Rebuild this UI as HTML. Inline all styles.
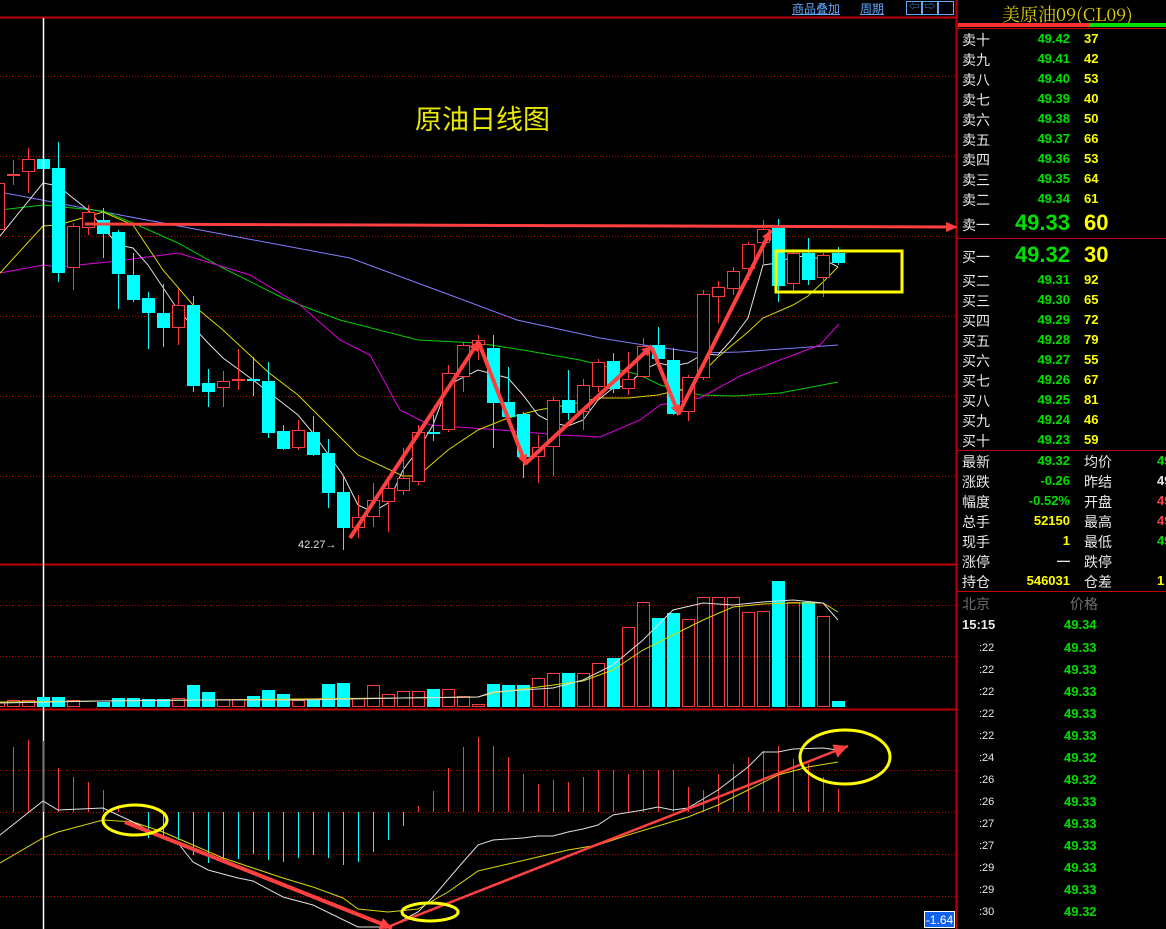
<!DOCTYPE html>
<html><head><meta charset="utf-8">
<style>
html,body{margin:0;padding:0;background:#000;width:1166px;height:929px;overflow:hidden;font-family:"Liberation Sans","Noto Sans CJK SC",sans-serif}
#c{position:absolute;left:0;top:0}
.p{position:absolute;left:957px;top:0;width:209px;height:929px}
.r{position:absolute;font-size:14px;white-space:nowrap}
.top{position:absolute;color:#60a8ff;font-size:12px;text-decoration:underline;top:0}
</style></head><body>
<svg id="c" width="1166" height="929" xmlns="http://www.w3.org/2000/svg"></svg>
<div class="top" style="left:792px">商品叠加</div>
<div class="top" style="left:860px">周期</div>
<div style="position:absolute;left:906px;top:1px;width:14px;height:12px;border:1px solid #60a8ff;color:#60a8ff;font-size:10px;line-height:12px;text-align:center">⇦</div>
<div style="position:absolute;left:922px;top:1px;width:14px;height:12px;border:1px solid #60a8ff;color:#60a8ff;font-size:10px;line-height:12px;text-align:center">⇨</div>
<div style="position:absolute;left:938px;top:1px;width:14px;height:12px;border:1px solid #60a8ff"></div>
<div style="position:absolute;left:415px;top:98px;color:#e8e800;font-size:27px;font-family:'Noto Sans CJK SC',sans-serif">原油日线图</div>
<div style="position:absolute;left:298px;top:539px;color:#e0e0e0;font-size:11px">42.27→</div>
<div style="position:absolute;left:924px;top:911px;width:31px;height:17px;background:#1060f0;border:1px solid #fff;box-sizing:border-box;color:#fff;font-size:12px;line-height:16px;text-align:center">-1.64</div>
<div class="p" id="p">
<div style="position:absolute;left:45px;top:1px;color:#e0d000;font-size:18px;font-family:'Noto Serif CJK SC','Liberation Serif',serif">美原油09(CL09)</div>
<div style="position:absolute;left:1px;top:23px;width:131px;height:4px;background:#ff3030"></div>
<div style="position:absolute;left:132px;top:23px;width:77px;height:4px;background:#00e000"></div>
</div>
<script>
const S='http://www.w3.org/2000/svg',c=document.getElementById('c');
function E(t,a){const e=document.createElementNS(S,t);for(const k in a)e.setAttribute(k,a[k]);c.appendChild(e);return e}
function L(x1,y1,x2,y2,s,w,d){const a={x1,y1,x2,y2,stroke:s,'stroke-width':w||1};if(d)a['stroke-dasharray']=d;E('line',a)}
function P(pts,s,w){E('polyline',{points:pts.map(p=>p.join(',')).join(' '),fill:'none',stroke:s,'stroke-width':w||1})}
L(0,17.5,956,17.5,'#c00000',2);
[76,156,236,316,396,476,605,656,770,812,854,896].forEach(y=>L(0,y+.5,956,y+.5,'#c00000',1,'1,2'));
L(0,564.5,956,564.5,'#c00000',2);L(0,709.5,956,709.5,'#c00000',2);
L(956.5,0,956.5,929,'#c00000',2);
L(957,28.5,1166,28.5,'#c00000',1);L(957,238.5,1166,238.5,'#c00000',1);L(957,450.5,1166,450.5,'#c00000',1);L(957,591.5,1166,591.5,'#c00000',1);
P([[0,192],[120,215],[350,258],[450,295],[517,320],[600,338],[650,346],[700,353],[740,352],[838,345]],'#8080ff');
P([[0,210],[43,205],[103,211],[133,223],[178,243],[223,268],[283,298],[313,310],[340,320],[418,340],[478,343],[523,350],[580,360],[640,375],[660,385],[680,390],[700,395],[735,396],[780,393],[838,382]],'#00d000');
P([[0,273],[43,265],[58,267],[118,261],[178,253],[250,275],[300,305],[340,340],[370,355],[400,410],[430,425],[500,430],[560,435],[600,437],[640,420],[660,405],[700,398],[740,376],[780,360],[820,345],[839,324]],'#e000e0');
P([[0,273],[43,226],[58,225],[103,212],[133,225],[163,270],[193,305],[223,330],[268,372],[298,395],[328,425],[358,455],[403,476],[418,476],[448,450],[478,430],[508,418],[538,410],[568,405],[598,398],[628,398],[658,395],[688,388],[718,357],[748,332],[763,318],[793,305],[808,296],[823,282],[838,267]],'#d8d800');
P([[0,236],[43,183],[58,186],[88,210],[118,245],[133,248],[148,265],[178,310],[208,343],[223,358],[253,380],[298,415],[313,433],[343,475],[358,505],[373,512],[388,503],[403,470],[418,450],[433,425],[448,385],[478,370],[508,378],[523,395],[538,415],[553,423],[568,426],[583,420],[598,400],[613,388],[628,385],[643,370],[658,363],[673,366],[688,363],[703,354],[718,355],[733,338],[748,318],[763,265],[778,263],[793,256],[808,257],[823,259],[838,267]],'#e0e0e0');
const K=[[-2,183,230,183,230,'r'],[13,174,176,160,185,'r'],[28,159,172,148,193,'r'],[43,159,169,159,169,'c'],[58,168,273,142,282,'c'],[73,226,268,223,290,'r'],[88,212,228,205,235,'r'],[103,220,234,208,258,'c'],[118,232,274,230,309,'c'],[133,275,300,253,302,'c'],[148,298,313,292,349,'c'],[163,313,328,284,347,'c'],[178,305,328,289,345,'r'],[193,305,386,296,392,'c'],[208,383,392,369,407,'c'],[223,381,388,371,407,'r'],[238,379,381,349,390,'r'],[253,379,381,357,396,'c'],[268,381,433,362,438,'c'],[283,431,449,425,450,'c'],[298,430,448,420,450,'r'],[313,432,455,416,456,'c'],[328,453,493,439,508,'c'],[343,492,528,477,550,'c'],[358,517,528,495,538,'r'],[373,500,517,483,527,'r'],[388,488,502,478,532,'r'],[403,478,491,448,495,'r'],[418,432,482,425,485,'r'],[433,432,434,415,441,'c'],[448,373,430,365,432,'r'],[463,345,377,342,392,'r'],[478,340,345,335,360,'r'],[493,348,403,335,448,'c'],[508,402,417,367,417,'c'],[523,414,457,412,478,'c'],[538,447,457,435,483,'r'],[553,400,447,397,476,'r'],[568,400,413,370,420,'c'],[583,385,412,379,430,'r'],[598,362,387,359,392,'r'],[613,361,389,353,393,'c'],[628,379,389,352,395,'r'],[643,346,377,338,378,'r'],[658,345,359,327,360,'c'],[673,360,414,348,415,'c'],[688,377,412,375,421,'r'],[703,294,378,290,380,'r'],[718,287,297,281,323,'r'],[733,271,289,267,295,'r'],[748,244,269,242,280,'r'],[763,229,243,220,265,'r'],[778,228,286,219,302,'c'],[793,253,284,250,294,'r'],[808,253,280,238,285,'c'],[823,255,278,253,297,'r'],[838,253,263,247,265,'c']];
K.forEach(k=>{const[x,t,b,wt,wb,col]=k;
 if(col=='c'){L(x+.5,wt,x+.5,wb,'#00ffff');E('rect',{x:x-6,y:t,width:13,height:Math.max(2,b-t),fill:'#00ffff'})}
 else{L(x+.5,wt,x+.5,wb,'#ff3b3b');E('rect',{x:x-5.5,y:t+.5,width:12,height:Math.max(1,b-t-1),fill:'#000',stroke:'#ff3b3b'})}});
L(43.5,18,43.5,929,'#fff',1.5);
L(85,224,950,227,'#ff4040',3);E('polygon',{points:'958,227 946,222 946,232',fill:'#ff4040'});
function A(x1,y1,x2,y2,w,h){L(x1,y1,x2,y2,'#ff4040',w);const a=Math.atan2(y2-y1,x2-x1),s=h||10;
 const p=[[x2,y2],[x2-s*Math.cos(a)+s*.5*Math.sin(a),y2-s*Math.sin(a)-s*.5*Math.cos(a)],[x2-s*Math.cos(a)-s*.5*Math.sin(a),y2-s*Math.sin(a)+s*.5*Math.cos(a)]];
 E('polygon',{points:p.map(q=>q.join(',')).join(' '),fill:'#ff4040'})}
A(350,538,479,341,4);A(479,343,526,465,4);A(526,463,652,346,4);A(652,348,679,415,4);A(679,413,771,230,4);
E('rect',{x:776,y:251,width:126,height:41,fill:'none',stroke:'#ffff00','stroke-width':3});
const V=[[-2,702,'r'],[13,700,'r'],[28,700,'r'],[43,697,'c'],[58,697,'c'],[73,700,'r'],[88,706,'r'],[103,702,'c'],[118,698,'c'],[133,698,'c'],[148,699,'c'],[163,699,'c'],[178,698,'r'],[193,685,'c'],[208,692,'c'],[223,699,'r'],[238,699,'r'],[253,696,'c'],[268,690,'c'],[283,694,'c'],[298,700,'r'],[313,700,'c'],[328,684,'c'],[343,683,'c'],[358,698,'r'],[373,685,'r'],[388,694,'r'],[403,691,'r'],[418,691,'r'],[433,689,'c'],[448,689,'r'],[463,696,'r'],[478,704,'r'],[493,684,'c'],[508,685,'c'],[523,685,'c'],[538,678,'r'],[553,673,'r'],[568,673,'c'],[583,673,'r'],[598,663,'r'],[613,658,'c'],[628,627,'r'],[643,602,'r'],[658,618,'c'],[673,613,'c'],[688,619,'r'],[703,597,'r'],[718,597,'r'],[733,597,'r'],[748,612,'r'],[763,611,'r'],[778,581,'c'],[793,602,'r'],[808,602,'c'],[823,616,'r'],[838,701,'c']];
V.forEach(v=>{const[x,t,col]=v;if(col=='c')E('rect',{x:x-6,y:t,width:13,height:707-t,fill:'#00ffff'});else E('rect',{x:x-5.5,y:t+.5,width:12,height:706-t,fill:'none',stroke:'#ff3b3b'})});
P([[0,702],[100,701],[200,700],[300,699],[400,698],[478,697],[493,693],[583,681],[613,670],[643,650],[673,635],[703,620],[733,607],[763,604],[793,603],[823,603],[838,612]],'#d8d800');
P([[0,703],[100,701],[200,700],[300,700],[400,698],[478,697],[493,692],[553,688],[583,680],[613,665],[643,640],[673,610],[703,603],[733,605],[763,602],[793,600],[823,603],[838,620]],'#e0e0e0');
const M=[[13,747],[28,740],[43,741],[58,768],[73,777],[88,782],[103,790],[118,805],[148,838],[163,837],[178,840],[193,855],[208,863],[223,860],[238,859],[253,854],[268,860],[283,862],[298,858],[313,855],[328,858],[343,865],[358,862],[373,852],[388,840],[403,826],[418,806],[433,791],[448,768],[463,747],[478,737],[493,746],[508,757],[523,774],[538,784],[553,780],[568,782],[583,777],[598,770],[613,770],[628,774],[643,770],[658,770],[673,770],[688,787],[703,790],[718,774],[733,764],[748,757],[763,751],[778,746],[793,759],[808,764],[823,777],[838,789]];
M.forEach(m=>L(m[0]+.5,812,m[0]+.5,m[1],m[1]<812?'#ff3b3b':'#00ffff'));
P([[0,863],[43,838],[58,832],[103,820],[133,822],[163,832],[193,845],[223,858],[253,868],[283,878],[313,887],[343,898],[358,909],[388,912],[418,909],[448,892],[478,871],[508,864],[538,857],[568,850],[598,845],[628,835],[658,826],[688,817],[718,805],[748,790],[778,775],[808,767],[838,762]],'#d8d800');
P([[0,835],[43,801],[58,810],[103,808],[118,815],[133,822],[163,838],[178,843],[193,862],[208,870],[238,878],[253,881],[283,897],[313,905],[358,927],[388,927],[403,920],[418,912],[433,897],[463,862],[478,845],[493,840],[523,838],[538,836],[553,836],[568,832],[583,829],[598,825],[613,815],[643,810],[658,807],[673,810],[688,808],[718,790],[748,767],[763,752],[778,752],[793,749],[823,748],[838,750]],'#e0e0e0');
A(125,822,392,928,4,12);A(385,928,848,746,2.5,14);
E('ellipse',{cx:135,cy:820,rx:32,ry:15,fill:'none',stroke:'#ffff00','stroke-width':3});
E('ellipse',{cx:430,cy:912,rx:28,ry:9,fill:'none',stroke:'#ffff00','stroke-width':3});
E('ellipse',{cx:845,cy:757,rx:45,ry:27,fill:'none',stroke:'#ffff00','stroke-width':3});
const p=document.getElementById('p');
function T(x,y,txt,st){const d=document.createElement('div');d.className='r';d.style.cssText=st;d.style.top=y+'px';d.textContent=txt;p.appendChild(d)}
const sell=[['十','49.42','37'],['九','49.41','42'],['八','49.40','53'],['七','49.39','40'],['六','49.38','50'],['五','49.37','66'],['四','49.36','53'],['三','49.35','64'],['二','49.34','61']];
sell.forEach((s,i)=>{const y=30+i*20;T(0,y,'卖'+s[0],'left:5px;color:#e8e8e8');T(0,y+1,s[1],'right:96px;color:#00e000;font-weight:bold;font-size:13px');T(0,y+1,s[2],'left:127px;color:#ffff00;font-weight:bold;font-size:13px')});
T(0,215,'卖一','left:5px;color:#e8e8e8');T(0,210,'49.33','right:96px;color:#00e000;font-weight:bold;font-size:22px');T(0,210,'60','left:127px;color:#ffff00;font-weight:bold;font-size:22px');
T(0,247,'买一','left:5px;color:#e8e8e8');T(0,242,'49.32','right:96px;color:#00e000;font-weight:bold;font-size:22px');T(0,242,'30','left:127px;color:#ffff00;font-weight:bold;font-size:22px');
const buy=[['二','49.31','92'],['三','49.30','65'],['四','49.29','72'],['五','49.28','79'],['六','49.27','55'],['七','49.26','67'],['八','49.25','81'],['九','49.24','46'],['十','49.23','59']];
buy.forEach((s,i)=>{const y=271+i*20;T(0,y,'买'+s[0],'left:5px;color:#e8e8e8');T(0,y+1,s[1],'right:96px;color:#00e000;font-weight:bold;font-size:13px');T(0,y+1,s[2],'left:127px;color:#ffff00;font-weight:bold;font-size:13px')});
const st=[['最新','49.32','#00e000','均价','49','#00e000'],['涨跌','-0.26','#00e000','昨结','49','#e8e8e8'],['幅度','-0.52%','#00e000','开盘','49','#ff4040'],['总手','52150','#ffff00','最高','49','#ff4040'],['现手','1','#ffff00','最低','49','#00e000'],['涨停','—','#e8e8e8','跌停','',''],['持仓','546031','#ffff00','仓差','1','#ffff00']];
st.forEach((s,i)=>{const y=452+i*20;T(0,y,s[0],'left:5px;color:#e8e8e8');T(0,y+1,s[1],'right:96px;font-weight:bold;font-size:13px;color:'+s[2]);T(0,y,s[3],'left:127px;color:#e8e8e8');if(s[4])T(0,y+1,s[4],'left:200px;font-weight:bold;font-size:13px;color:'+s[5])});
T(0,594,'北京','left:5px;color:#707070');T(0,594,'价格','left:113px;color:#707070');
T(0,617,'15:15','left:5px;color:#e8e8e8;font-weight:bold;font-size:13px');T(0,617,'49.34','left:107px;color:#00e000;font-weight:bold;font-size:13px');
const tk=[[':22','49.33'],[':22','49.33'],[':22','49.33'],[':22','49.33'],[':22','49.33'],[':24','49.32'],[':26','49.32'],[':26','49.33'],[':27','49.33'],[':27','49.33'],[':29','49.33'],[':29','49.33'],[':30','49.32']];
tk.forEach((t,i)=>{const y=642+i*22;T(0,y,t[0],'left:22px;color:#e8e8e8;font-size:11px');T(0,y-2,t[1],'left:107px;color:#00e000;font-weight:bold;font-size:13px')});
</script>
</body></html>
